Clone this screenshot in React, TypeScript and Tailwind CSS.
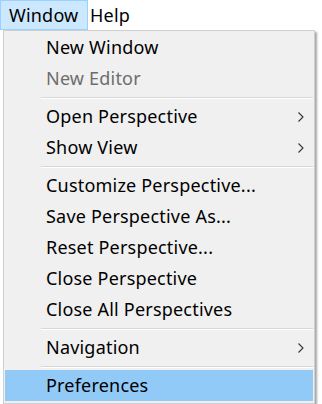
import React from "react";

type Item =
  | { kind: "item"; label: string; disabled?: boolean; sub?: boolean; active?: boolean }
  | { kind: "sep" };

const items: Item[] = [
  { kind: "item", label: "New Window" },
  { kind: "item", label: "New Editor", disabled: true },
  { kind: "sep" },
  { kind: "item", label: "Open Perspective", sub: true },
  { kind: "item", label: "Show View", sub: true },
  { kind: "sep" },
  { kind: "item", label: "Customize Perspective..." },
  { kind: "item", label: "Save Perspective As..." },
  { kind: "item", label: "Reset Perspective..." },
  { kind: "item", label: "Close Perspective" },
  { kind: "item", label: "Close All Perspectives" },
  { kind: "sep" },
  { kind: "item", label: "Navigation", sub: true },
  { kind: "sep" },
  { kind: "item", label: "Preferences", active: true },
];

function Chevron() {
  return (
    <svg width="8" height="12" viewBox="0 0 8 12" className="mr-[8px]">
      <path d="M1.5 1.5 L6 6 L1.5 10.5" fill="none" stroke="#333" strokeWidth="1.1" />
    </svg>
  );
}

export default function App() {
  return (
    <div
      className="relative w-[322px] h-[404px] bg-white overflow-hidden text-black tracking-[0.2px]"
      style={{ fontFamily: '"Noto Sans", "Open Sans", sans-serif' }}
    >
      <div className="flex h-[30px] items-stretch text-[18px]">
        <div className="flex items-center px-[8px] bg-[#cce8ff] border border-[#99d1ff] w-[88px]">Window</div>
        <div className="flex items-center px-[2px]">Help</div>
      </div>
      <div className="ml-[3px] w-[312px] h-[374px] bg-[#f0f0f0] border border-[#cfcfcf] pt-[1px] px-[1px] shadow-[2px_2px_2px_rgba(0,0,0,0.35)] text-[18px]">
        {items.map((it, i) =>
          it.kind === "sep" ? (
            <div key={i} className="h-[7px] flex flex-col justify-center pl-[36px]">
              <div className="h-px bg-[#d7d7d7]" />
              <div className="h-px bg-white" />
            </div>
          ) : (
            <div
              key={i}
              className={
                "h-[31px] flex items-center justify-between pl-[41px] " +
                (it.active ? "bg-[#91c9f7]" : "")
              }
            >
              <span className={it.disabled ? "text-[#6d6d6d]" : "text-black"}>{it.label}</span>
              {it.sub ? <Chevron /> : null}
            </div>
          )
        )}
      </div>
    </div>
  );
}
